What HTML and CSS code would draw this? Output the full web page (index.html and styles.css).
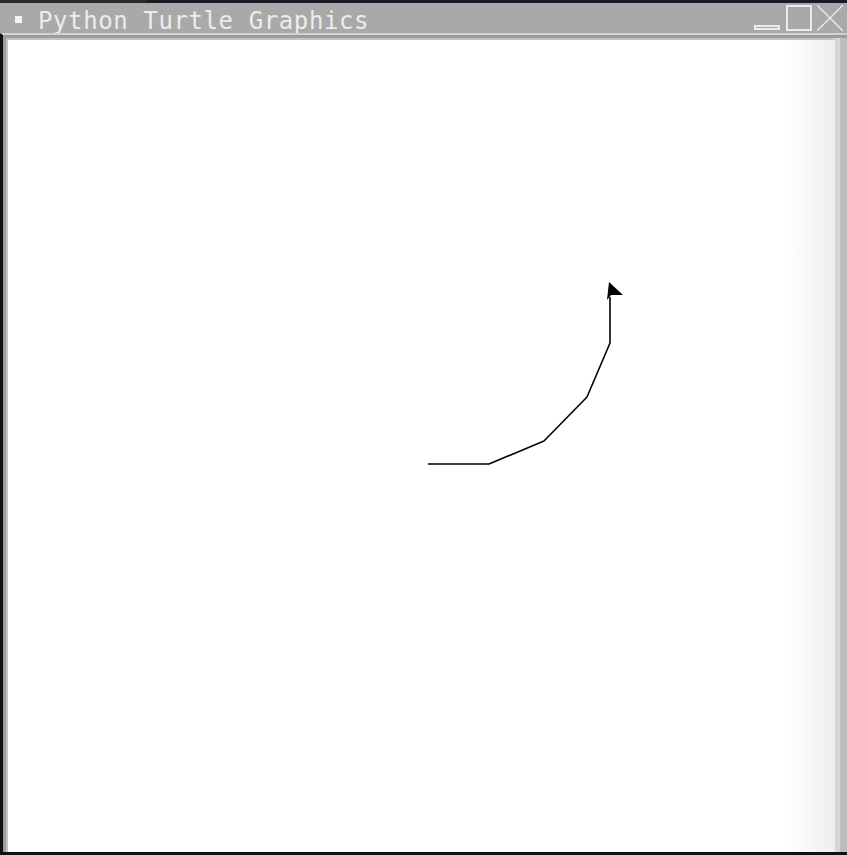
FILE: index.html
```html
<!DOCTYPE html>
<html lang="en">
<head>
<meta charset="UTF-8" />
<meta name="viewport" content="width=device-width, initial-scale=1" />
<title>Python Turtle Graphics</title>
<link rel="stylesheet" href="styles.css">
</head>
<body>
<div class="screen">
  <div class="top-strip"></div>

  <header class="title-bar">
    <span class="win-icon" aria-hidden="true"></span>
    <span class="win-title">Python Turtle Graphics</span>
    <div class="win-controls">
      <button class="btn-min" aria-label="Minimize"></button>
      <button class="btn-max" aria-label="Maximize"></button>
      <button class="btn-close" aria-label="Close">
        <svg viewBox="0 0 26 26" aria-hidden="true"><path d="M0 0 L26 26 M26 0 L0 26" /></svg>
      </button>
    </div>
  </header>

  <main class="window-body">
    <div class="frame">
      <div class="canvas">
        <svg class="turtle-canvas" width="827" height="812" viewBox="8 40 827 812" aria-label="Turtle drawing">
          <polyline class="trail" points="428,464 489,464 544,441 587,397 610,343 610,297" />
          <polygon class="turtle" points="609,282 623,295 611,295 607,300" />
        </svg>
      </div>
      <div class="right-edge"></div>
    </div>
  </main>
</div>
</body>
</html>
```

FILE: styles.css
```css
/* Reset and base */
* {
  box-sizing: border-box;
}
body {
  margin: 0;
  background: #111;
  font-family: "DejaVu Sans Mono", "Liberation Mono", monospace;
}

.screen {
  width: 847px;
  height: 855px;
  display: flex;
  flex-direction: column;
  overflow: hidden;
}

/* Desktop strip above the window */
.top-strip {
  height: 3px;
  background: linear-gradient(to right, #2a2a2a 0, #2a2a2a 147px, #1b1b26 147px);
}

/* Title bar */
.title-bar {
  height: 30px;
  background: #a9a9a9;
  display: flex;
  align-items: center;
  padding-left: 15px;
}
.win-icon {
  width: 7px;
  height: 7px;
  background: #f2f2f2;
  margin-right: 16px;
  margin-top: 3px;
}
.win-title {
  color: #ececec;
  font-size: 24px;
  letter-spacing: 0.6px;
  line-height: 1;
  margin-top: 5px;
}
.win-controls {
  margin-left: auto;
  display: flex;
  align-items: flex-end;
  gap: 5px;
  padding-right: 4px;
  height: 26px;
}
.win-controls button {
  padding: 0;
  margin: 0;
  background: none;
  border: none;
}
.btn-min {
  width: 26px;
  height: 5px;
  border: 2px solid #ececec !important;
  margin-bottom: 1px !important;
  margin-right: 1px !important;
}
.btn-max {
  width: 26px;
  height: 26px;
  border: 2px solid #ececec !important;
}
.btn-close {
  width: 26px;
  height: 26px;
}
.btn-close svg {
  display: block;
  width: 26px;
  height: 26px;
  stroke: #ececec;
  stroke-width: 1.3;
}

/* Window body */
.window-body {
  flex: 1;
  border-top: 2px solid #d2d2d2;
  border-left: 3px solid #111;
  border-bottom: 3px solid #111;
  background: #9c9c9c;
  padding: 3px 0 0 3px;
  display: flex;
}
.frame {
  flex: 1;
  display: flex;
}
.canvas {
  width: 829px;
  border-top: 2px solid #c4c4c4;
  border-left: 2px solid #c4c4c4;
  background: linear-gradient(to right, #fff 0, #fff 780px, #eeeeee 827px);
}
.turtle-canvas {
  display: block;
}
.trail {
  fill: none;
  stroke: #000;
  stroke-width: 1.6;
  stroke-linejoin: round;
}
.turtle {
  fill: #000;
}
.right-edge {
  flex: 1;
  background: linear-gradient(to right, #d6d6d6 0, #d6d6d6 5px, #bdbdbd 5px);
}
```
